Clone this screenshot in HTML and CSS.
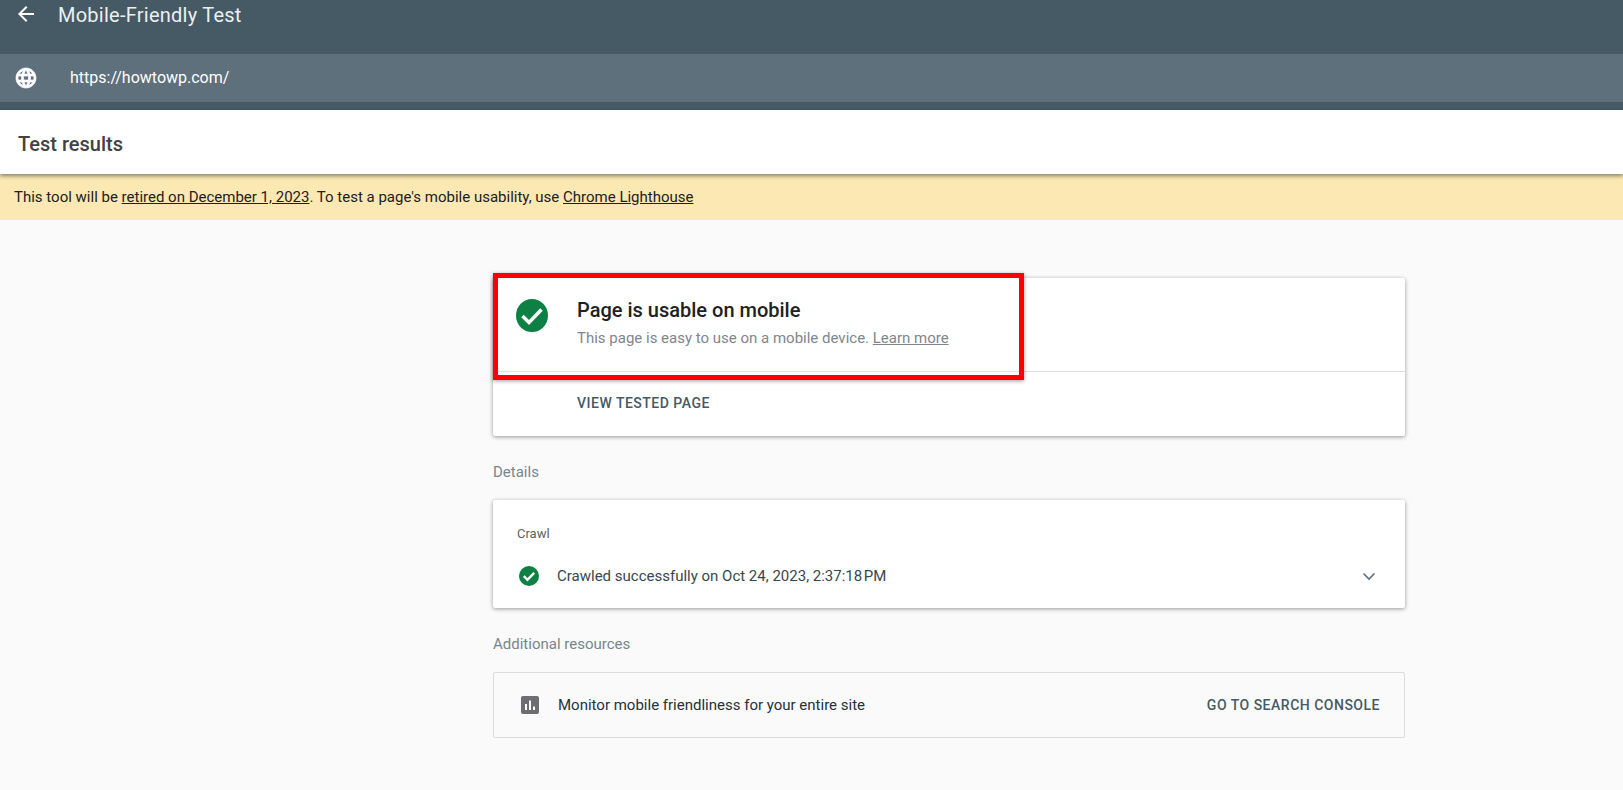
FILE: index.html
```html
<!DOCTYPE html>
<html lang="en">
<head>
  <meta charset="UTF-8">
  <title>Mobile-Friendly Test</title>
  <link rel="stylesheet" href="styles.css">
</head>
<body>
  <header class="topbar">
    <div class="title-row">
      <svg class="back-icon" viewBox="0 0 24 24" width="24" height="24"><path fill="#fff" d="M20 11H7.830l5.590-5.590L12 4l-8 8 8 8 1.410-1.410L7.830 13H20v-2z"/></svg>
      <span class="app-title">Mobile-Friendly Test</span>
    </div>
    <div class="url-row">
      <svg class="globe-icon" viewBox="0 0 24 24" width="24" height="24"><path fill="#fff" stroke="#fff" stroke-width="0.7" d="M11.99 2C6.47 2 2 6.48 2 12s4.47 10 9.99 10C17.52 22 22 17.52 22 12S17.52 2 11.99 2zm6.930 6h-2.950a15.650 15.650 0 0 0-1.380-3.560A8.030 8.030 0 0 1 18.920 8zM12 4.040c.83 1.200 1.480 2.530 1.910 3.960h-3.820c.43-1.430 1.080-2.760 1.910-3.960zM4.260 14C4.100 13.360 4 12.690 4 12s.1-1.360.26-2h3.380c-.08.66-.14 1.320-.14 2 0 .68.06 1.340.14 2H4.260zm.82 2h2.950c.32 1.250.78 2.450 1.380 3.560A7.987 7.987 0 0 1 5.080 16zm2.950-8H5.080a7.987 7.987 0 0 1 4.330-3.560A15.650 15.650 0 0 0 8.030 8zM12 19.960c-.83-1.200-1.480-2.530-1.910-3.960h3.820c-.43 1.430-1.080 2.760-1.910 3.960zM14.340 14H9.660c-.09-.66-.16-1.320-.16-2 0-.68.07-1.350.16-2h4.680c.09.650.16 1.320.16 2 0 .68-.07 1.340-.16 2zm.25 5.560c.6-1.110 1.060-2.310 1.380-3.560h2.950a8.030 8.030 0 0 1-4.330 3.560zM16.360 14c.08-.66.14-1.320.14-2 0-.68-.06-1.340-.14-2h3.380c.16.64.26 1.310.26 2s-.1 1.360-.26 2h-3.380z"/></svg>
      <span class="url-text">https://howtowp.com/</span>
    </div>
  </header>

  <div class="results-bar">Test results</div>

  <div class="notice">This tool will be <a href="#">retired on December 1, 2023</a>. To test a page's mobile usability, use <a href="#">Chrome Lighthouse</a></div>

  <main class="content">
    <section class="card verdict-card">
      <div class="verdict">
        <svg class="check-big" viewBox="0 0 32 33" width="32" height="33"><ellipse cx="16" cy="16.500" rx="16" ry="16.500" fill="#0d8043"/><path fill="none" stroke="#fff" stroke-width="3.500" d="M6.500 17l6.500 6.500L25.500 10.500"/></svg>
        <div>
          <h2 class="verdict-title">Page is usable on mobile</h2>
          <p class="verdict-sub">This page is easy to use on a mobile device. <a href="#">Learn more</a></p>
        </div>
      </div>
      <div class="verdict-action">VIEW TESTED PAGE</div>
      <div class="highlight"></div>
    </section>

    <h3 class="section-label">Details</h3>
    <section class="card crawl-card">
      <div class="crawl-label">Crawl</div>
      <div class="crawl-row">
        <svg class="check-small" viewBox="0 0 20 20" width="20" height="20"><circle cx="10" cy="10" r="10" fill="#0d8043"/><path fill="none" stroke="#fff" stroke-width="2.400" d="M4.800 10.200l3.600 3.600 6.800-7"/></svg>
        <span class="crawl-text">Crawled successfully on Oct 24, 2023, 2:37:18&#8202;PM</span>
        <svg class="chevron" viewBox="0 0 14 9" width="14" height="9"><path fill="none" stroke="#5f6f78" stroke-width="1.600" d="M1.500 1.500L7 7l5.500-5.500"/></svg>
      </div>
    </section>

    <h3 class="section-label additional">Additional resources</h3>
    <section class="resource-box">
      <svg class="chart-icon" viewBox="0 0 18 18" width="18" height="18"><rect width="18" height="18" rx="2" fill="#6d6d72"/><path fill="#fff" d="M4 8h2v6H4zM8 4.500h2V14H8zM12 10.500h2V14h-2z"/></svg>
      <span class="resource-text">Monitor mobile friendliness for your entire site</span>
      <a class="resource-link" href="#">GO TO SEARCH CONSOLE</a>
    </section>
  </main>
</body>
</html>
```

FILE: styles.css
```css
body {
  margin: 0;
  background-color: #fafafa;
  font-family: Roboto, "Liberation Sans", sans-serif;
  color: #212121;
  height: 790px;
  overflow: hidden;
}

a {
  color: inherit;
}

.topbar {
  background-color: #455a64;
  height: 110px;
  color: #fff;
}
.title-row {
  height: 54px;
  display: flex;
  align-items: flex-start;
  padding-left: 14px;
  box-sizing: border-box;
}
.back-icon {
  margin-top: 2px;
}
.app-title {
  margin-left: 20px;
  font-size: 20px;
  letter-spacing: 0.25px;
  line-height: 30px;
  color: #eceff1;
}
.url-row {
  height: 48px;
  background-color: #5d707b;
  display: flex;
  align-items: center;
  padding-left: 14px;
}
.url-text {
  margin-left: 32px;
  margin-bottom: 2px;
  font-size: 16px;
}

.results-bar {
  height: 64px;
  background-color: #fff;
  padding-left: 18px;
  font-size: 20px;
  font-weight: 500;
  line-height: 68px;
  color: #424242;
  position: relative;
  box-shadow: 0 2px 4px rgba(0, 0, 0, 0.45);
}

.notice {
  height: 46px;
  line-height: 46px;
  background-color: #fce8b2;
  padding-left: 14px;
  font-size: 15px;
}

.content {
  width: 912px;
  margin-left: 493px;
  padding-top: 58px;
}

.card {
  background-color: #fff;
  border-radius: 2px;
  box-shadow: 0 1px 4px rgba(0, 0, 0, 0.4);
}

.verdict-card {
  position: relative;
  height: 158px;
}
.verdict {
  height: 93px;
  border-bottom: 1px solid #e0e0e0;
  display: flex;
  padding-left: 23px;
}
.check-big {
  margin-top: 21px;
  margin-right: 29px;
}
.verdict-title {
  margin: 20px 0 0;
  font-size: 20px;
  font-weight: 500;
  line-height: 24px;
}
.verdict-sub {
  margin: 6px 0 0;
  font-size: 15px;
  line-height: 20px;
  color: #80868b;
}
.verdict-action {
  padding-left: 84px;
  line-height: 63px;
  font-size: 14px;
  font-weight: 500;
  letter-spacing: 0.5px;
  color: #455a64;
}
.highlight {
  position: absolute;
  left: 0;
  top: -5px;
  width: 531px;
  height: 107px;
  box-sizing: border-box;
  border: 5px solid #ff0000;
  box-shadow: 0 1px 4px rgba(0, 0, 0, 0.4);
}

.section-label {
  margin: 26px 0 0;
  font-size: 15px;
  font-weight: 400;
  line-height: 20px;
  color: #78858c;
}

.crawl-card {
  margin-top: 18px;
  height: 108px;
  padding: 26px 24px 0;
  box-sizing: border-box;
}
.crawl-label {
  font-size: 13px;
  line-height: 16px;
  color: #616161;
}
.crawl-row {
  margin-top: 24px;
  display: flex;
  align-items: center;
}
.check-small {
  margin-left: 2px;
}
.crawl-text {
  margin-left: 18px;
  font-size: 15px;
  color: #37474f;
}
.chevron {
  margin-left: auto;
  margin-right: 5px;
}

.resource-box {
  margin-top: 18px;
  height: 66px;
  box-sizing: border-box;
  border: 1px solid #dadce0;
  border-radius: 2px;
  display: flex;
  align-items: center;
  padding: 0 24px 0 27px;
}
.resource-text {
  margin-left: 19px;
  font-size: 15px;
  color: #263238;
}
.resource-link {
  margin-left: auto;
  font-size: 14px;
  font-weight: 500;
  letter-spacing: 0.5px;
  color: #455a64;
  text-decoration: none;
}
```
